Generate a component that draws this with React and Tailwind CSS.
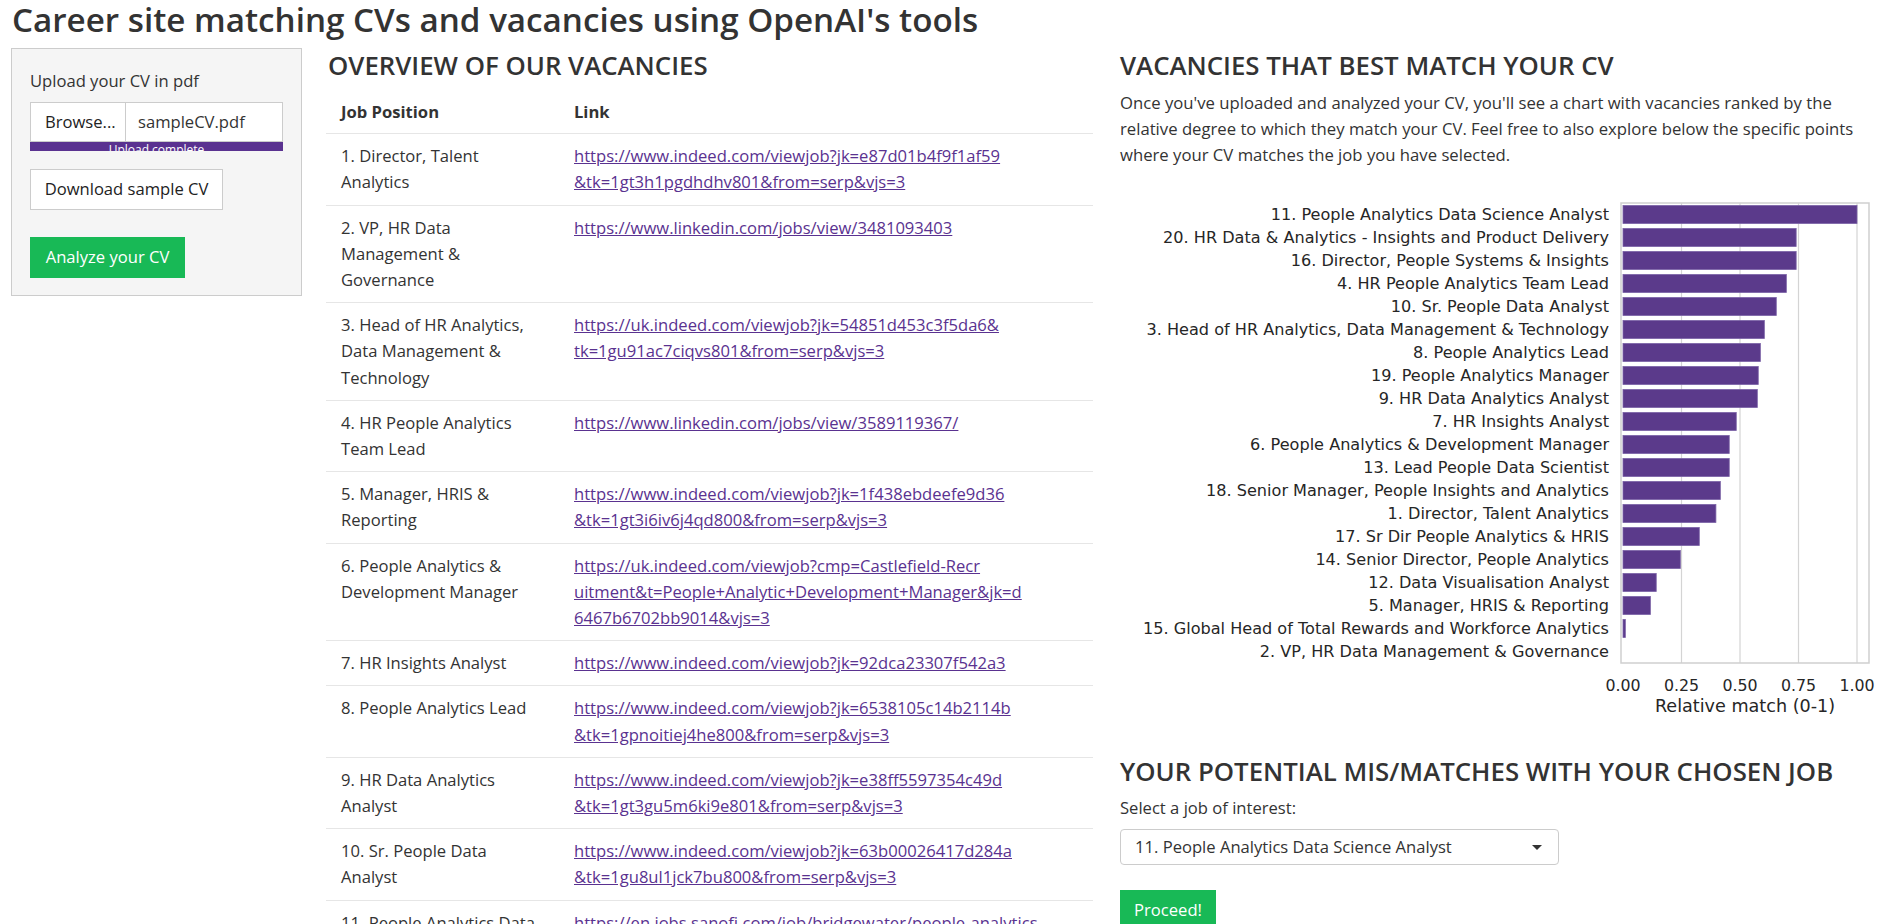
import React from 'react';

const jobs = [
  {
    title: ['1. Director, Talent', 'Analytics'],
    link: ['https://www.indeed.com/viewjob?jk=e87d01b4f9f1af59', '&tk=1gt3h1pgdhdhv801&from=serp&vjs=3']
  },
  {
    title: ['2. VP, HR Data', 'Management &', 'Governance'],
    link: ['https://www.linkedin.com/jobs/view/3481093403']
  },
  {
    title: ['3. Head of HR Analytics,', 'Data Management &', 'Technology'],
    link: ['https://uk.indeed.com/viewjob?jk=54851d453c3f5da6&', 'tk=1gu91ac7ciqvs801&from=serp&vjs=3']
  },
  {
    title: ['4. HR People Analytics', 'Team Lead'],
    link: ['https://www.linkedin.com/jobs/view/3589119367/']
  },
  {
    title: ['5. Manager, HRIS &', 'Reporting'],
    link: ['https://www.indeed.com/viewjob?jk=1f438ebdeefe9d36', '&tk=1gt3i6iv6j4qd800&from=serp&vjs=3']
  },
  {
    title: ['6. People Analytics &', 'Development Manager'],
    link: [
      'https://uk.indeed.com/viewjob?cmp=Castlefield-Recr',
      'uitment&t=People+Analytic+Development+Manager&jk=d',
      '6467b6702bb9014&vjs=3'
    ]
  },
  {
    title: ['7. HR Insights Analyst'],
    link: ['https://www.indeed.com/viewjob?jk=92dca23307f542a3']
  },
  {
    title: ['8. People Analytics Lead'],
    link: ['https://www.indeed.com/viewjob?jk=6538105c14b2114b', '&tk=1gpnoitiej4he800&from=serp&vjs=3']
  },
  {
    title: ['9. HR Data Analytics', 'Analyst'],
    link: ['https://www.indeed.com/viewjob?jk=e38ff5597354c49d', '&tk=1gt3gu5m6ki9e801&from=serp&vjs=3']
  },
  {
    title: ['10. Sr. People Data', 'Analyst'],
    link: ['https://www.indeed.com/viewjob?jk=63b00026417d284a', '&tk=1gu8ul1jck7bu800&from=serp&vjs=3']
  },
  {
    title: ['11. People Analytics Data', 'Science Analyst'],
    link: ['https://en.jobs.sanofi.com/job/bridgewater/people-analytics-', 'data-science-analyst']
  }
];

const matches = [
  ['11. People Analytics Data Science Analyst', 1.0],
  ['20. HR Data & Analytics - Insights and Product Delivery', 0.74],
  ['16. Director, People Systems & Insights', 0.74],
  ['4. HR People Analytics Team Lead', 0.698],
  ['10. Sr. People Data Analyst', 0.655],
  ['3. Head of HR Analytics, Data Management & Technology', 0.604],
  ['8. People Analytics Lead', 0.587],
  ['19. People Analytics Manager', 0.578],
  ['9. HR Data Analytics Analyst', 0.574],
  ['7. HR Insights Analyst', 0.484],
  ['6. People Analytics & Development Manager', 0.454],
  ['13. Lead People Data Scientist', 0.454],
  ['18. Senior Manager, People Insights and Analytics', 0.416],
  ['1. Director, Talent Analytics', 0.397],
  ['17. Sr Dir People Analytics & HRIS', 0.326],
  ['14. Senior Director, People Analytics', 0.245],
  ['12. Data Visualisation Analyst', 0.142],
  ['5. Manager, HRIS & Reporting', 0.117],
  ['15. Global Head of Total Rewards and Workforce Analytics', 0.01],
  ['2. VP, HR Data Management & Governance', 0]
];

// chart geometry (px inside the svg)
const X0 = 503;
const UNIT = 234;
const TOP = 23;
const ROW = 23;

const MatchChart = () => (
  <svg width="760" height="540" className="block mt-[12px]">
    {[0.25, 0.5, 0.75, 1].map((v) => (
      <line key={v} x1={X0 + v * UNIT} x2={X0 + v * UNIT} y1={TOP} y2={TOP + 20 * ROW} stroke="#d4d4d4" strokeWidth="1.2" />
    ))}
    <rect x="501" y={TOP} width="248" height={20 * ROW} fill="none" stroke="#cfcfcf" strokeWidth="1.5" />
    {matches.map(([label, v], i) => (
      <g key={label}>
        {v > 0 && (
          <rect x={X0} y={TOP + i * ROW + 2.5} width={v * UNIT} height="18" fill="#5b3a8b" stroke="#7b62a6" strokeWidth="0.8" />
        )}
        <text
          x="489"
          y={TOP + i * ROW + 11.5}
          textAnchor="end"
          dominantBaseline="central"
          fontSize="16.1"
          fill="#262626"
          fontFamily="'DejaVu Sans', sans-serif"
        >
          {label}
        </text>
      </g>
    ))}
    {['0.00', '0.25', '0.50', '0.75', '1.00'].map((t, i) => (
      <text
        key={t}
        x={X0 + i * 0.25 * UNIT}
        y="505"
        textAnchor="middle"
        dominantBaseline="central"
        fontSize="15.8"
        fill="#262626"
        fontFamily="'DejaVu Sans', sans-serif"
      >
        {t}
      </text>
    ))}
    <text x="625" y="526" textAnchor="middle" dominantBaseline="central" fontSize="17.6" fill="#262626" fontFamily="'DejaVu Sans', sans-serif">
      Relative match (0-1)
    </text>
  </svg>
);

const App = () => {
  return (
    <div className="h-[924px] overflow-hidden bg-white text-[#333333] font-['Open_Sans',sans-serif] text-[16.6px] leading-[26.2px]">
      <h2 className="pl-[12px] text-[33.2px] leading-[40px] font-semibold text-[#333333]">
        Career site matching CVs and vacancies using OpenAI's tools
      </h2>

      <div className="flex items-start mt-[8px]">
        {/* Sidebar */}
        <div className="ml-[11px] w-[291px] shrink-0 bg-[#f5f5f5] border border-[#cccccc] px-[18px] pt-[19px] pb-[17px]">
          <div className="leading-[26px]">Upload your CV in pdf</div>
          <div className="mt-[8px] flex h-[40px] bg-white">
            <div className="w-[96px] border border-[#cccccc] flex items-center pl-[14px] text-[#222]">Browse...</div>
            <div className="flex-1 border border-l-0 border-[#cccccc] flex items-center pl-[12px] text-[#333]">sampleCV.pdf</div>
          </div>
          <div className="h-[9px] bg-[#5a3290] overflow-hidden text-center text-white text-[12px] leading-[15px]">
            Upload complete
          </div>
          <button
            type="button"
            className="mt-[18px] w-[193px] h-[41px] bg-white border border-[#cccccc] text-[#222] text-[16.6px]"
          >
            Download sample CV
          </button>
          <button type="button" className="mt-[27px] block w-[155px] h-[41px] bg-[#18b956] text-white text-[16.6px]">
            Analyze your CV
          </button>
        </div>

        {/* Vacancies table */}
        <div className="ml-[24px] w-[767px] shrink-0">
          <h4 className="mt-[2px] pl-[2px] text-[25.8px] leading-[30px] font-semibold text-[#333333]">OVERVIEW OF OUR VACANCIES</h4>
          <table className="mt-[11px] w-full border-collapse">
            <thead>
              <tr className="border-b border-[#e6e6e6]">
                <th className="w-[234px] pl-[15px] pr-[10px] py-[8px] text-left font-bold">Job Position</th>
                <th className="pl-[14px] py-[8px] text-left font-bold">Link</th>
              </tr>
            </thead>
            <tbody>
              {jobs.map((job) => (
                <tr key={job.title[0]} className="border-b border-[#e6e6e6] align-top">
                  <td className="pl-[15px] pr-[10px] py-[9px] leading-[26.2px] whitespace-nowrap">
                    {job.title.map((line) => (
                      <div key={line}>{line}</div>
                    ))}
                  </td>
                  <td className="pl-[14px] py-[9px] leading-[26.2px] whitespace-nowrap">
                    <a href="#" className="text-[#5a3290] underline">
                      {job.link.map((line) => (
                        <div key={line}>{line}</div>
                      ))}
                    </a>
                  </td>
                </tr>
              ))}
            </tbody>
          </table>
        </div>

        {/* Matches */}
        <div className="ml-[27px] flex-1">
          <h4 className="mt-[2px] text-[25.8px] leading-[30px] font-semibold text-[#333333]">VACANCIES THAT BEST MATCH YOUR CV</h4>
          <p className="mt-[10px] leading-[26px] whitespace-nowrap text-[16.7px]">
            Once you've uploaded and analyzed your CV, you'll see a chart with vacancies ranked by the
            <br />
            relative degree to which they match your CV. Feel free to also explore below the specific points
            <br />
            where your CV matches the job you have selected.
          </p>
          <MatchChart />

          <h4 className="mt-[36px] text-[25.8px] leading-[30px] font-semibold text-[#333333]">
            YOUR POTENTIAL MIS/MATCHES WITH YOUR CHOSEN JOB
          </h4>
          <div className="mt-[9px] leading-[26px]">Select a job of interest:</div>
          <div className="mt-[8px] w-[439px] h-[36px] border border-[#cccccc] rounded-[4px] bg-white flex items-center justify-between pl-[14px] pr-[16px]">
            <span className="text-[#333]">11. People Analytics Data Science Analyst</span>
            <span className="w-0 h-0 border-l-[5px] border-r-[5px] border-t-[5px] border-l-transparent border-r-transparent border-t-[#333]" />
          </div>
          <button type="button" className="mt-[25px] block w-[96px] h-[41px] bg-[#18b956] text-white text-[16.6px]">
            Proceed!
          </button>
        </div>
      </div>
    </div>
  );
};

export default App;
